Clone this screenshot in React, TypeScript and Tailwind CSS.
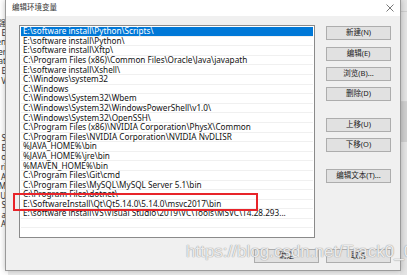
import React from 'react';

const paths = [
  'E:\\software install\\Python\\Scripts\\',
  'E:\\software install\\Python\\',
  'E:\\software install\\Xftp\\',
  'C:\\Program Files (x86)\\Common Files\\Oracle\\Java\\javapath',
  'E:\\software install\\Xshell\\',
  'C:\\Windows\\system32',
  'C:\\Windows',
  'C:\\Windows\\System32\\Wbem',
  'C:\\Windows\\System32\\WindowsPowerShell\\v1.0\\',
  'C:\\Windows\\System32\\OpenSSH\\',
  'C:\\Program Files (x86)\\NVIDIA Corporation\\PhysX\\Common',
  'C:\\Program Files\\NVIDIA Corporation\\NVIDIA NvDLISR',
  '%JAVA_HOME%\\bin',
  '%JAVA_HOME%\\jre\\bin',
  '%MAVEN_HOME%\\bin',
  'C:\\Program Files\\Git\\cmd',
  'C:\\Program Files\\MySQL\\MySQL Server 5.1\\bin',
  'C:\\Program Files\\dotnet\\',
  'E:\\SoftwareInstall\\Qt\\Qt5.14.0\\5.14.0\\msvc2017\\bin',
  'E:\\software install\\VS\\Visual Studio\\2019\\VC\\Tools\\MSVC\\14.28.293...',
];

// fragments of the window behind the dialog, only the right edge shows
const behind = ['强', 'E', 'en', 'er', 'at', 'E', 'V', '', '', '', '', '', 'S', 'E', 'o', 'ri', 'A', 'M', 'U', 'S', 'a', 'A'];

function Btn({ label, className = '' }: { label: string; className?: string }) {
  return (
    <div
      className={`h-[14px] w-[65px] flex items-center justify-center bg-[#e1e1e1] border border-[#adadad] text-[7.5px] text-[#222] ${className}`}
    >
      {label}
    </div>
  );
}

export default function App() {
  const font = { fontFamily: '"Noto Sans", "Noto Sans CJK SC", sans-serif' };
  return (
    <div className="relative w-[407px] h-[275px] overflow-hidden bg-[#ececec]" style={font}>
      {/* window behind */}
      <div className="absolute left-0 top-0 w-[8px] h-[275px] bg-white overflow-hidden">
        <div className="pt-[18px] flex flex-col items-end pr-[2px] text-[8px] leading-[9.6px] text-[#333]">
          {behind.map((t, i) => (
            <div key={i} className="h-[9.6px] whitespace-nowrap">{t}</div>
          ))}
        </div>
      </div>
      {/* right edge of desktop */}
      <div className="absolute right-0 top-0 w-[7px] h-[275px] bg-[#e4e4e4] flex flex-col">
        <div className="h-[12px] border-b border-[#cfcfcf]" />
        <div className="h-[90px] border-b border-[#d2d2d2]" />
        <div className="h-[40px] bg-[#cfcfcf]" />
      </div>

      {/* dialog */}
      <div className="absolute left-[5px] top-0 w-[396px] h-[271px] border border-[#9a9a9a] border-t-0 bg-[#f0f0f0] flex flex-col shadow-[0_0_6px_rgba(0,0,0,0.25)]">
        <div className="h-[16px] bg-white flex items-center justify-between pl-[6px] pr-[6px]">
          <span className="text-[7.5px] text-[#333]">编辑环境变量</span>
          <svg width="8" height="8" viewBox="0 0 8 8">
            <path d="M0.5 0.5L7.5 7.5M7.5 0.5L0.5 7.5" stroke="#555" strokeWidth="0.8" />
          </svg>
        </div>

        <div className="flex pl-[13px] pt-[9px]">
          <div className="w-[296px] h-[213px] bg-white border border-[#8a8a8a] p-[1px] overflow-hidden">
            {paths.map((p, i) => (
              <div
                key={i}
                className={`h-[9.6px] pl-[2px] flex items-center whitespace-nowrap text-[8.2px] leading-none border-b border-[#f0f0f0] ${
                  i === 0 ? 'bg-[#0078d7] text-white' : 'text-[#111]'
                }`}
              >
                {p}
              </div>
            ))}
            <div className="h-[9.6px] border-b border-[#f0f0f0]" />
            <div className="h-[9.6px] border-b border-[#f0f0f0]" />
          </div>

          <div className="ml-[11px] pt-[1px] flex flex-col">
            <Btn label="新建(N)" />
            <Btn label="编辑(E)" className="mt-[7px]" />
            <Btn label="浏览(B)..." className="mt-[6px]" />
            <Btn label="删除(D)" className="mt-[6px]" />
            <Btn label="上移(U)" className="mt-[17px]" />
            <Btn label="下移(O)" className="mt-[6px]" />
            <Btn label="编辑文本(T)..." className="mt-[17px]" />
          </div>
        </div>

        <div className="flex justify-end gap-[7px] pr-[9px] mt-[11px]">
          <Btn label="确定" className="border-[#0078d7]" />
          <Btn label="取消" />
        </div>
      </div>

      {/* highlight box */}
      <div className="absolute left-[13px] top-[193px] w-[245px] h-[18px] border-2 border-[#e8242a]" />

      {/* watermark */}
      <div
        className="absolute left-[186px] top-[243px] text-[17px] leading-none text-white/80 whitespace-nowrap"
        style={{ fontFamily: '"Liberation Sans", sans-serif', textShadow: '0 0 1px #999, 0 0 1px #999' }}
      >
        https://blog.csdn.net/Track0_0
      </div>
    </div>
  );
}
